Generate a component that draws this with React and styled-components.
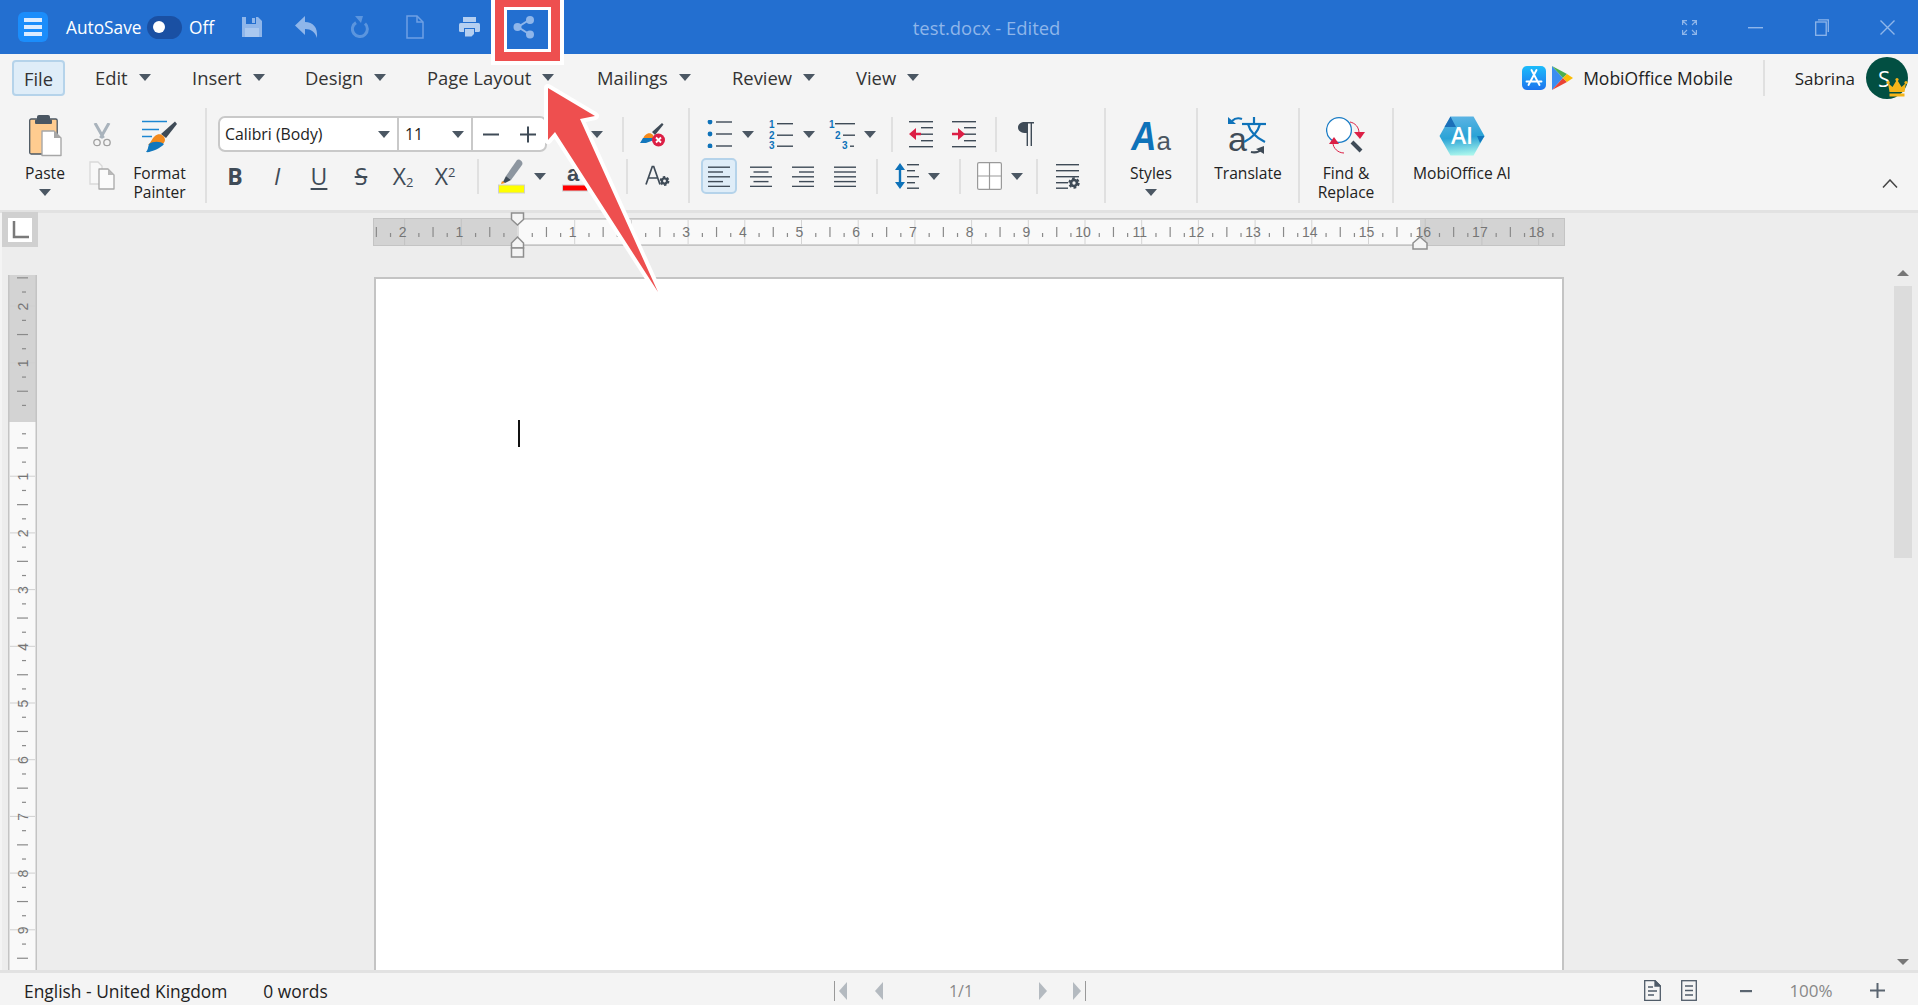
import React from "react";
import styled, { createGlobalStyle } from "styled-components";

const INK = "#3f4b57";
const BLUE = "#0e72b9";
const QUICK = "#8fb6ea";
const UI_FONT = `"Open Sans", "Noto Sans", sans-serif`;

const Global = createGlobalStyle`
  html, body, #root { margin: 0; padding: 0; height: 100%; }
  body { font-family: ${UI_FONT}; background: #f4f4f4; overflow: hidden; color: #222; }
  * { box-sizing: border-box; }
  svg { display: block; flex: none; }
`;

const Page = styled.div`
  position: relative;
  width: 1918px;
  height: 1005px;
  display: flex;
  flex-direction: column;
  overflow: hidden;
`;

/* ---------- title bar ---------- */
const TitleBar = styled.header`
  height: 54px;
  flex: none;
  background: #236fd0;
  display: flex;
  align-items: center;
  padding-left: 18px;
  color: #fff;
`;
const AppButton = styled.div`
  width: 30px;
  height: 30px;
  border-radius: 6px;
  background: #1b8dfb;
  display: flex;
  flex-direction: column;
  justify-content: center;
  gap: 3px;
  padding: 0 6px;
  span { height: 4px; background: #dcebff; }
`;
const AutoSaveLabel = styled.span`
  margin-left: 18px;
  font-size: 17.3px;
  width: 81px;
  white-space: nowrap;
`;
const Toggle = styled.div`
  width: 35px;
  height: 23px;
  border-radius: 12px;
  background: #1a50a3;
  display: flex;
  align-items: center;
  padding-left: 6px;
  span { width: 12px; height: 12px; border-radius: 50%; background: #fff; }
`;
const OffLabel = styled.span`
  margin-left: 7px;
  font-size: 17.3px;
  width: 36px;
`;
const QuickSlot = styled.div`
  width: 54.3px;
  height: 30px;
  display: flex;
  align-items: center;
  justify-content: center;
`;
const DocTitle = styled.div`
  margin-left: 362px;
  width: 200px;
  font-size: 18.4px;
  color: #8fb6ea;
  white-space: nowrap;
`;
const WindowControls = styled.div`
  margin-left: auto;
  display: flex;
  align-items: center;
  padding-right: 23px;
  gap: 51.5px;
`;

/* ---------- menu row ---------- */
const MenuRow = styled.nav`
  height: 51px;
  flex: none;
  display: flex;
  align-items: center;
  padding: 0 10px 3px 12px;
  font-size: 18.4px;
  color: #333;
`;
const FileTab = styled.div`
  width: 53px;
  height: 36px;
  margin-right: 30px;
  border: 2px solid #b5d3ea;
  border-radius: 4px;
  background: #dfedf8;
  display: flex;
  align-items: center;
  justify-content: center;
`;
const MenuItem = styled.div`
  width: ${(p) => p.$w}px;
  display: flex;
  align-items: center;
  gap: 11px;
  padding-bottom: 2px;
  white-space: nowrap;
`;
const Caret = styled.span`
  flex: none;
  width: 0;
  height: 0;
  display: inline-block;
  margin-left: ${(p) => p.$ml || 0}px;
  margin-top: ${(p) => p.$mt || 0}px;
  border-left: 6px solid transparent;
  border-right: 6px solid transparent;
  border-top: 7px solid #4b5763;
`;
const PromoGroup = styled.div`
  margin-left: auto;
  display: flex;
  align-items: center;
  color: #222;
  gap: 6px;
`;
const PromoText = styled.span`
  margin-left: 4px;
  font-size: 17.5px;
`;
const VBar = styled.span`
  width: 2px;
  height: 36px;
  margin: 0 24px;
  background: #e0e0e0;
`;
const UserName = styled.span`
  font-size: 17px;
  margin-right: 5px;
`;
const Avatar = styled.div`
  position: relative;
  width: 42px;
  height: 42px;
  border-radius: 50%;
  background: #024f42;
  color: #fff;
  font-size: 22px;
  display: flex;
  align-items: center;
  justify-content: center;
  padding-right: 6px;
`;
const CrownBadge = styled.span`
  position: absolute;
  right: 0;
  bottom: 1px;
`;

/* ---------- ribbon ---------- */
const Ribbon = styled.section`
  height: 108px;
  flex: none;
  display: flex;
  align-items: flex-start;
  border-bottom: 3px solid #e2e2e2;
`;
const GroupSep = styled.span`
  flex: none;
  width: 2px;
  height: 95px;
  margin-top: 3px;
  background: #e0e0e0;
`;
const ClipGroup = styled.div`
  width: 205px;
  display: flex;
`;
const BigButton = styled.div`
  width: ${(p) => p.$w}px;
  flex: none;
  padding-top: 6px;
  display: flex;
  flex-direction: column;
  align-items: center;
`;
const IconBox = styled.div`
  height: 50px;
  margin-bottom: 2.5px;
  display: flex;
  align-items: center;
  justify-content: center;
`;
const Label = styled.div`
  font-size: 15.6px;
  line-height: 19.5px;
  text-align: center;
  color: #222;
  white-space: nowrap;
`;
const SmallColumn = styled.div`
  width: 24px;
  padding-top: 18px;
  display: flex;
  flex-direction: column;
  align-items: center;
  gap: 14px;
`;
const ToolGroup = styled.div`
  width: ${(p) => p.$w}px;
  flex: none;
  padding-top: 11px;
  display: flex;
  flex-direction: column;
  gap: 6px;
`;
const Row = styled.div`
  height: 36px;
  display: flex;
  align-items: center;
`;
const Tool = styled.span`
  flex: none;
  width: ${(p) => p.$w}px;
  height: 36px;
  margin-left: ${(p) => p.$ml || 0}px;
  padding-left: ${(p) => p.$pl || 0}px;
  display: flex;
  align-items: center;
  justify-content: center;
  border-radius: 5px;
  border: ${(p) => (p.$active ? "2px solid #b5d3ea" : "none")};
  background: ${(p) => (p.$active ? "#dfedf8" : "transparent")};
`;
const ListTool = styled.span`
  flex: none;
  width: 61px;
  margin-left: ${(p) => p.$ml || 0}px;
  display: flex;
  align-items: center;
  gap: 9px;
`;
const ShortSep = styled.span`
  flex: none;
  width: 2px;
  height: 35px;
  margin-left: ${(p) => p.$ml || 0}px;
  background: #e0e0e0;
`;
const Combo = styled.div`
  width: 329px;
  height: 36px;
  margin-left: 11px;
  flex: none;
  display: flex;
  border: 2px solid #c9c9c9;
  border-radius: 7px;
  background: #fff;
  font-size: 15.8px;
  color: #222;
`;
const ComboCell = styled.div`
  width: ${(p) => p.$w}px;
  flex: none;
  display: flex;
  align-items: center;
  justify-content: space-between;
  padding: 0 7px 0 5px;
  border-right: ${(p) => (p.$last ? "none" : "2px solid #c9c9c9")};
`;
const SizeValue = styled.span`
  margin-left: 1px;
`;
const Glyph = styled.span`
  font-size: 23px;
  line-height: 1;
  color: ${INK};
  font-weight: ${(p) => (p.$bold ? 700 : 400)};
  font-style: ${(p) => (p.$italic ? "italic" : "normal")};
  text-decoration: ${(p) => p.$deco || "none"};
  text-underline-offset: 3px;
  sub, sup { font-size: 13px; line-height: 0; }
  sub { vertical-align: -2px; }
  sup { vertical-align: 8px; }
`;
const StylesMark = styled.div`
  height: 42px;
  display: flex;
  align-items: baseline;
  font-family: "Liberation Sans", sans-serif;
  line-height: 42px;
  color: #4a5560;
  font-size: 26px;
  b {
    font-size: 41px;
    font-style: italic;
    color: ${BLUE};
    display: inline-block;
    transform: scaleX(0.85);
    margin: 0 -2px;
  }
`;
const CollapseSlot = styled.div`
  margin-left: auto;
  padding: 74px 20px 0 0;
`;

/* ---------- workspace ---------- */
const Workspace = styled.main`
  flex: 1;
  min-height: 0;
  display: grid;
  grid-template-columns: 372px 1193px 1fr;
  grid-template-rows: 64px 1fr;
  background: #ededed;
  border-left: 2px solid #f4f4f4;
`;
const Corner = styled.div`
  width: 36px;
  height: 35px;
  background: #d0d0d0;
  display: flex;
  align-items: center;
  justify-content: center;
  margin-top: -1px;
`;
const CornerInner = styled.div`
  width: 24px;
  height: 24px;
  background: #fff;
  display: flex;
  align-items: center;
  justify-content: center;
`;
const HRulerSlot = styled.div`
  margin-left: -1px;
  margin-top: -1px;
`;
const VRulerSlot = styled.div`
  margin: -2px 0 0 6px;
  overflow: hidden;
`;
const Sheet = styled.div`
  width: 1190px;
  background: #fff;
  border: 2px solid #c4c4c4;
  border-bottom: none;
  padding: 141px 0 0 142px;
`;
const TextCursor = styled.div`
  width: 2px;
  height: 27px;
  background: #111;
`;
const ScrollTrack = styled.div`
  grid-column: 3;
  grid-row: 1 / 3;
  justify-self: end;
  width: 18px;
  margin-right: 6px;
  padding: 57px 0 5px;
  display: flex;
  flex-direction: column;
  align-items: center;
`;
const ScrollUp = styled.span`
  border-left: 6px solid transparent;
  border-right: 6px solid transparent;
  border-bottom: 6px solid #777;
`;
const ScrollDown = styled.span`
  margin-top: auto;
  border-left: 6px solid transparent;
  border-right: 6px solid transparent;
  border-top: 6px solid #777;
`;
const ScrollThumb = styled.div`
  width: 18px;
  height: 272px;
  margin-top: 10px;
  background: #dcdcdc;
`;

/* ---------- status bar ---------- */
const StatusBar = styled.footer`
  height: 35px;
  flex: none;
  border-top: 3px solid #e2e2e2;
  background: #f4f4f4;
  display: flex;
  align-items: center;
  font-size: 17.4px;
  color: #222;
  padding-top: 3px;
`;
const StatusLeft = styled.div`
  width: 834px;
  padding-left: 24px;
  display: flex;
  gap: 36px;
  white-space: nowrap;
`;
const PagerText = styled.span`
  width: 110px;
  margin-left: ${(p) => p.$ml || 0}px;
  text-align: center;
  font-size: 16px;
  color: #888;
`;
const PagerButton = styled.span`
  margin-left: ${(p) => p.$ml || 0}px;
`;
const StatusRight = styled.div`
  margin-left: auto;
  padding-right: 33px;
  display: flex;
  align-items: center;
  color: #888;
  font-size: 17px;
`;
const ZoomText = styled.span`
  width: 44px;
  margin: 0 37px;
  text-align: center;
  white-space: nowrap;
`;
const ViewButton = styled.span`
  margin-right: ${(p) => p.$mr || 0}px;
`;

/* ---------- annotation overlay ---------- */
const ShareFrame = styled.div`
  position: absolute;
  left: 495px;
  top: 0;
  width: 65px;
  height: 61px;
  border: 9px solid #ee4f4f;
  border-top-width: 7px;
  border-bottom-width: 9px;
  outline: 4px solid #fff;
  box-shadow: inset 0 0 0 3px #fff;
`;
const ArrowLayer = styled.svg`
  position: absolute;
  left: 0;
  top: 0;
  pointer-events: none;
`;

/* ---------- icons ---------- */
const SaveIcon = () => (
  <svg width="20" height="20" viewBox="0 0 20 20">
    <path d="M0 0H16L20 4V20H0Z" fill={QUICK} />
    <rect x="4" y="0" width="10" height="7" fill="#236fd0" />
    <rect x="10" y="1" width="3" height="5" fill={QUICK} />
    <rect x="3" y="11" width="14" height="9" fill="#a9c8f0" />
  </svg>
);
const UndoIcon = () => (
  <svg width="23" height="22" viewBox="0 0 23 22">
    <path d="M10 0V6C18 6 23 11 22 22C20 16 16 13 10 13V19L0 9.5Z" fill={QUICK} />
  </svg>
);
const RedoIcon = () => (
  <svg width="20" height="22" viewBox="0 0 20 22" fill="none">
    <path d="M14 7.5A7.5 7.5 0 1 1 5 6.6" stroke="#5b95de" strokeWidth="3" />
    <path d="M4 0L12 0 10 7Z" fill="#5b95de" />
  </svg>
);
const NewDocIcon = () => (
  <svg width="18" height="24" viewBox="0 0 18 24" fill="none">
    <path d="M1 1H11L17 7V23H1Z" stroke="#6fa0e3" strokeWidth="1.5" />
    <path d="M11 1V7H17" stroke="#6fa0e3" strokeWidth="1.5" />
  </svg>
);
const PrintIcon = () => (
  <svg width="21" height="20" viewBox="0 0 21 20">
    <rect x="4" y="0" width="13" height="5" fill="#b4cff1" />
    <rect x="0" y="6" width="21" height="9" rx="1.5" fill="#b4cff1" />
    <rect x="5" y="11" width="11" height="9" fill="#236fd0" />
    <path d="M6 12H15V17L12.5 19.5H6Z" fill="#b4cff1" />
  </svg>
);
const ShareIcon = () => (
  <svg width="22" height="24" viewBox="0 0 22 24" fill="none">
    <path d="M16 5L5 12L16 19" stroke={QUICK} strokeWidth="2" />
    <circle cx="17" cy="5" r="4" fill={QUICK} />
    <circle cx="4.5" cy="12" r="4" fill={QUICK} />
    <circle cx="17" cy="19.5" r="4" fill={QUICK} />
  </svg>
);
const FullIcon = () => (
  <svg width="15" height="15" viewBox="0 0 15 15" fill="none" stroke={QUICK} strokeWidth="1.2">
    <path d="M0.6 5V0.6H5M0.6 0.6L5 5M14.4 5V0.6H10M14.4 0.6L10 5M0.6 10V14.4H5M0.6 14.4L5 10M14.4 10V14.4H10M14.4 14.4L10 10" />
  </svg>
);
const MinIcon = () => (
  <svg width="15" height="15" viewBox="0 0 15 15">
    <rect y="7" width="15" height="1.4" fill={QUICK} />
  </svg>
);
const MaxIcon = () => (
  <svg width="14" height="17" viewBox="0 0 14 17" fill="none" stroke={QUICK} strokeWidth="1.3">
    <rect x="0.7" y="3" width="10.5" height="13.3" />
    <path d="M3 0.8H13.3V13" />
  </svg>
);
const CloseIcon = () => (
  <svg width="15" height="15" viewBox="0 0 15 15" stroke={QUICK} strokeWidth="1.4">
    <path d="M0.5 0.5L14.5 14.5M14.5 0.5L0.5 14.5" />
  </svg>
);
const AppStoreIcon = () => (
  <svg width="24" height="24" viewBox="0 0 24 24">
    <defs>
      <linearGradient id="appstore" x1="0" y1="0" x2="0" y2="1">
        <stop offset="0" stopColor="#1cbcfb" />
        <stop offset="1" stopColor="#1d74ee" />
      </linearGradient>
    </defs>
    <rect width="24" height="24" rx="5" fill="url(#appstore)" />
    <path d="M9.5 4L17.5 19M14.5 4L6.5 19M4.5 15.5H19.5" stroke="#fff" strokeWidth="1.9" strokeLinecap="round" />
  </svg>
);
const PlayIcon = () => (
  <svg width="21" height="24" viewBox="0 0 21 24">
    <path d="M0 0L11 12L0 24Z" fill="#3b8df1" />
    <path d="M0 0L15 8L11 12Z" fill="#4caf50" />
    <path d="M0 24L15 16L11 12Z" fill="#ea4335" />
    <path d="M15 8L21 12L15 16L11 12Z" fill="#fbbc04" />
  </svg>
);
const CrownIcon = () => (
  <svg width="22" height="20" viewBox="0 0 22 20" fill="#f4b41a">
    <path d="M2 5L6.5 9L11 1.5L15.5 9L20 5L18.5 14H3.5Z" />
    <rect x="3.5" y="15.5" width="15" height="3" />
    <circle cx="2" cy="4.5" r="1.6" />
    <circle cx="20" cy="4.5" r="1.6" />
    <circle cx="11" cy="1.6" r="1.6" />
  </svg>
);
const PasteIcon = () => (
  <svg width="36" height="44" viewBox="0 0 36 44">
    <rect x="2.7" y="5" width="27.5" height="35" rx="1.5" fill="#ffcc90" stroke="#4b5763" strokeWidth="1.3" />
    <rect x="10" y="1" width="13" height="7" rx="2" fill="#4b5763" />
    <rect x="8" y="5.5" width="17" height="4.5" rx="1" fill="#4b5763" />
    <path d="M15 17H27L34 24V41.5H15Z" fill="#fff" stroke="#a7a7a7" strokeWidth="1.4" strokeLinejoin="round" />
    <path d="M27 17L34 24H27Z" fill="#a7a7a7" />
  </svg>
);
const ScissorsIcon = () => (
  <svg width="18" height="24" viewBox="0 0 18 24" fill="none">
    <path d="M2 0L10.5 15M16 0L7.5 15" stroke="#a9b3bc" strokeWidth="3" />
    <circle cx="4" cy="19.5" r="3.2" stroke="#a0a0a0" strokeWidth="1.3" />
    <circle cx="14" cy="19.5" r="3.2" stroke="#a0a0a0" strokeWidth="1.3" />
  </svg>
);
const CopyIcon = () => (
  <svg width="26" height="29" viewBox="0 0 26 29" fill="none">
    <path d="M1 1H9L13 5V23H1Z" stroke="#d9d9d9" strokeWidth="1.3" fill="#f8f8f8" />
    <path d="M10 8H19L25 14V28H10Z" fill="#fbfbfb" stroke="#a9a9a9" strokeWidth="1.3" strokeLinejoin="round" />
    <path d="M19 8L25 14H19Z" fill="#b9b9b9" />
  </svg>
);
const PainterIcon = () => (
  <svg width="36" height="33" viewBox="0 0 36 33" fill="none">
    <path d="M0 1.5H25M0 9.5H17M0 16.5H10" stroke="#1c86d1" strokeWidth="1.5" />
    <path d="M19 14L33 1.5L35 4L24 18Z" fill="#3f4b57" />
    <path d="M13 16C17 12 23 15 23 20C23 22 21 24 19 25L6 25C9 23 10 18 13 16Z" fill="#f48a1c" />
    <path d="M7 24C11 21 18 21 22 24C19 28 8 33 4 32C6 30 6 27 7 24Z" fill="#1277bd" />
  </svg>
);
const ClearFormatIcon = () => (
  <svg width="26" height="26" viewBox="0 0 26 26">
    <path d="M12 11L22 2L23.5 3.5L15 14Z" fill={INK} />
    <path d="M3 18C4 13 10 10 13 14L14 18Z" fill="#f48a1c" />
    <path d="M0 22L3 17L13 17L14 19L6 22Z" fill="#1277bd" />
    <circle cx="18.5" cy="19" r="6.5" fill="#dc1f45" />
    <path d="M16 16.5L21 21.5M21 16.5L16 21.5" stroke="#fff" strokeWidth="1.8" />
  </svg>
);
const Gear = ({ x, y, r = 3 }) => (
  <g fill="none" stroke={INK}>
    <circle cx={x} cy={y} r={r} strokeWidth={r * 0.9} />
    <circle cx={x} cy={y} r={r * 1.55} strokeWidth={r * 0.7} strokeDasharray={`${r * 0.9} ${r * 0.72}`} />
  </g>
);
const AGearIcon = () => (
  <svg width="26" height="22" viewBox="0 0 26 22">
    <path d="M1 19.5L7.3 1.5H8.7L15 19.5M4 13H12" fill="none" stroke={INK} strokeWidth="1.7" />
    <Gear x={19.5} y={16} r={2.6} />
  </svg>
);
const HighlightIcon = () => (
  <svg width="27" height="36" viewBox="0 0 27 36">
    <path d="M8 18L19 2C21 0 26 4 24 7L13 22Z" fill="#8d96a0" />
    <path d="M8 18L13 22L7 25L5 24Z" fill={INK} />
    <path d="M4 23L7 25L3 26Z" fill="#f48a1c" />
    <rect x="0.5" y="27" width="26" height="8" fill="#ffff00" stroke="#cfcfcf" />
  </svg>
);
const FontColorIcon = () => (
  <svg width="26" height="36" viewBox="0 0 26 36">
    <text x="5" y="23" fontFamily="Liberation Sans, sans-serif" fontSize="22" fontWeight="700" fill={INK}>a</text>
    <path d="M9 3L15 0" stroke={INK} strokeWidth="2" />
    <rect x="0.5" y="27" width="25" height="6" fill="#ff0000" stroke="#cfcfcf" />
  </svg>
);
const Lines = ({ x = 0, ys, w = 22, color = INK, lens }) =>
  ys.map((y, i) => (
    <rect key={y} x={x} y={y} width={lens ? lens[i] : w} height="1.4" fill={color} />
  ));
const BulletIcon = () => (
  <svg width="26" height="28" viewBox="0 0 26 28">
    {[2, 14, 26].map((y) => (
      <circle key={y} cx="3" cy={y} r="2.4" fill={BLUE} />
    ))}
    <Lines x={9} ys={[1.3, 13.3, 25.3]} w={16} />
  </svg>
);
const TinyNum = styled.text`
  font-family: "Liberation Sans", sans-serif;
  font-size: 10px;
  font-weight: 700;
  fill: ${BLUE};
`;
const NumberIcon = () => (
  <svg width="26" height="34" viewBox="0 -2 26 34">
    <TinyNum x="1" y="9">1</TinyNum>
    <TinyNum x="1" y="20">2</TinyNum>
    <TinyNum x="1" y="30">3</TinyNum>
    <Lines x={9} ys={[4, 15.5, 26.5]} w={16} />
  </svg>
);
const MultiIcon = () => (
  <svg width="26" height="34" viewBox="0 -2 26 34">
    <TinyNum x="0" y="9">1</TinyNum>
    <TinyNum x="6" y="20">2</TinyNum>
    <TinyNum x="13" y="30">3</TinyNum>
    <Lines x={6} ys={[4]} w={20} />
    <Lines x={14} ys={[15.5]} w={12} />
    <Lines x={21} ys={[26.5]} w={4} />
  </svg>
);
const IndentIcon = ({ flip }) => (
  <svg width="24" height="28" viewBox="0 0 24 28">
    <Lines ys={[1, 26]} w={24} />
    <Lines x={12} ys={[7, 13.5, 20]} w={12} />
    {flip ? (
      <path d="M0 12.8H6V8L13 14L6 20V15.2H0Z" fill="#dc1f45" />
    ) : (
      <path d="M12 12.8H7V8L0 14L7 20V15.2H12Z" fill="#dc1f45" />
    )}
  </svg>
);
const PilcrowIcon = () => (
  <svg width="16" height="24" viewBox="0 0 16 24">
    <path d="M7 0H16V1.4H14V24H12.6V1.4H10V24H8.6V11C3 11 0 9 0 5.5C0 2 3 0 7 0Z" fill={INK} />
  </svg>
);
const AlignIcon = ({ mode }) => {
  const long = 22;
  const short = 15;
  const spec = [long, short, long, short, long];
  return (
    <svg width="22" height="21" viewBox="0 0 22 21">
      {spec.map((w, i) => {
        const width = mode === "justify" ? long : w;
        const x = mode === "center" ? (long - width) / 2 : mode === "right" ? long - width : 0;
        return <rect key={i} x={x} y={i * 4.8 + 0.5} width={width} height="1.4" fill={INK} />;
      })}
    </svg>
  );
};
const SpacingIcon = () => (
  <svg width="25" height="26" viewBox="0 0 25 26">
    <path d="M5 0L10 7H6.2V19H10L5 26L0 19H3.8V7H0Z" fill={BLUE} />
    <Lines x={12} ys={[1, 7, 13, 19, 24.5]} lens={[12, 8, 12, 8, 12]} />
  </svg>
);
const BorderIcon = () => (
  <svg width="25" height="28" viewBox="0 0 25 28" fill="#fff" stroke="#9a9a9a" strokeWidth="1.2">
    <rect x="0.6" y="0.6" width="23.8" height="26.8" rx="1.5" />
    <path d="M12.5 1V27M1 14H24" />
  </svg>
);
const ParaSettingsIcon = () => (
  <svg width="24" height="26" viewBox="0 0 24 26">
    <Lines ys={[1, 7, 13]} w={23} />
    <Lines ys={[19, 24.5]} w={12} />
    <Gear x={18} y={20} r={3} />
  </svg>
);
const TranslateIcon = () => (
  <svg width="40" height="44" viewBox="0 -2 40 44" fill="none">
    <text x="0" y="35" fontFamily="Liberation Sans, sans-serif" fontSize="34" fill={INK}>a</text>
    <path d="M14 8H38" stroke={BLUE} strokeWidth="2.2" />
    <path d="M26 1V8" stroke={BLUE} strokeWidth="2.2" />
    <path d="M20 8C22 16 29 22 37 26M32 8C30 16 24 22 16 26" stroke={BLUE} strokeWidth="2.2" />
    <path d="M0 8V1L8 8Z" fill={BLUE} />
    <path d="M4 5C7 2 10 1.5 14 3" stroke={BLUE} strokeWidth="2.2" />
    <path d="M36 30V38L28 33Z" fill={INK} />
    <path d="M34 33C31 36 27 37 23 36" stroke={INK} strokeWidth="2.2" />
  </svg>
);
const FindReplaceIcon = () => (
  <svg width="40" height="40" viewBox="0 0 40 40" fill="none">
    <circle cx="13" cy="14" r="12.4" fill="#fff" stroke="#1a7cc5" strokeWidth="1.3" />
    <path d="M26 26L35 35" stroke={INK} strokeWidth="4" />
    <path d="M24 6C29 7 33 11 33 17" stroke="#dc1f45" strokeWidth="1" />
    <path d="M28 16H39L34 23Z" fill="#dc1f45" />
    <path d="M7 27C7 32 12 37 18 37" stroke="#dc1f45" strokeWidth="1" />
    <path d="M3 28H13L8 21Z" fill="#dc1f45" />
  </svg>
);
const AiIcon = () => (
  <svg width="46" height="40" viewBox="0 0 46 40">
    <defs>
      <linearGradient id="aihex" x1="0.3" y1="0" x2="0.4" y2="1">
        <stop offset="0" stopColor="#5db4e4" />
        <stop offset="0.55" stopColor="#2aa3d6" />
        <stop offset="1" stopColor="#a8f5ec" />
      </linearGradient>
    </defs>
    <path d="M0.5 20L11.5 0.5H34.5L45.5 20L34.5 39.5H11.5Z" fill="url(#aihex)" />
    <path d="M11.5 0.5L5.5 11H17Z" fill="#1c6fb8" />
    <path d="M45.5 20L38 20L41 27Z" fill="#1277bd" />
    <text x="23" y="28" textAnchor="middle" fontFamily="Open Sans, sans-serif" fontSize="23" fontWeight="600" fill="#fff">AI</text>
  </svg>
);
const ChevronUp = () => (
  <svg width="16" height="9" viewBox="0 0 16 9" fill="none" stroke="#444" strokeWidth="1.5">
    <path d="M1 8.5L8 1L15 8.5" />
  </svg>
);
const CornerMark = () => (
  <svg width="17" height="18" viewBox="0 0 17 18" fill="none" stroke="#7a7a7a" strokeWidth="2.5">
    <path d="M2 0V16H17" />
  </svg>
);
const PagerArrow = ({ dir, bar }) => {
  const points = dir === "left" ? "0,9 8,0 8,18" : "0,0 8,9 0,18";
  return (
    <svg width={bar ? 15 : 9} height="20" viewBox={`0 0 ${bar ? 15 : 9} 20`}>
      {dir === "left" ? (
        <>
          {bar && <rect x="0" y="0" width="1" height="20" fill="#999" />}
          <polygon points={points} transform={`translate(${bar ? 5 : 0} 1)`} fill="#b4bac0" />
        </>
      ) : (
        <>
          <polygon points={points} transform="translate(0 1)" fill="#b4bac0" />
          {bar && <rect x="12" y="0" width="1" height="20" fill="#999" />}
        </>
      )}
    </svg>
  );
};
const PageViewIcon = () => (
  <svg width="17" height="21" viewBox="0 0 17 21" fill="none" stroke="#4f5b68" strokeWidth="1.3">
    <path d="M0.7 0.7H11L16.3 6V20.3H0.7Z" />
    <path d="M11 0.7L16.3 6H11Z" fill="#4f5b68" />
    <path d="M4 7H9M4 11H13M4 15H10" />
  </svg>
);
const WebViewIcon = () => (
  <svg width="16" height="21" viewBox="0 0 16 21" fill="none" stroke="#4f5b68" strokeWidth="1.3">
    <rect x="0.7" y="0.7" width="14.6" height="19.6" />
    <path d="M4 6H12M4 10.5H12M4 15H12" />
  </svg>
);
const MinusIcon = () => (
  <svg width="12" height="12" viewBox="0 0 12 12">
    <rect y="5" width="12" height="2.2" fill="#5a6570" />
  </svg>
);
const PlusIcon = () => (
  <svg width="15" height="15" viewBox="0 0 15 15">
    <rect y="6.5" width="15" height="2" fill="#5a6570" />
    <rect x="6.5" width="2" height="15" fill="#5a6570" />
  </svg>
);
const ComboStepper = () => (
  <svg width="60" height="17" viewBox="0 0 60 17">
    <rect x="5" y="7.5" width="16" height="2" fill={INK} />
    <rect x="42" y="7.5" width="16" height="2" fill={INK} />
    <rect x="49" y="0.5" width="2" height="16" fill={INK} />
  </svg>
);

/* ---------- rulers ---------- */
const CM = 56.7;
const RULER_NUM = {
  fontFamily: "Liberation Sans, sans-serif",
  fontSize: 14,
  fill: "#757575",
};
const HRuler = () => {
  const zero = 144.5;
  const marks = [];
  for (let i = -3; i <= 19; i += 1) {
    const x = zero + i * CM;
    if (x > -CM && x < 1192) marks.push({ i, x });
  }
  return (
    <svg width="1192" height="48" viewBox="0 0 1192 48">
      <rect x="0" y="6" width="1192" height="28" fill="#d3d3d3" />
      <rect x="144" y="8" width="903" height="24" fill="#f9f9f9" />
      <rect x="0.5" y="6.5" width="1191" height="27" fill="none" stroke="#c4c4c4" />
      {marks.map(({ i, x }) => (
        <g key={i}>
          {x > 0 && (
            <rect x={x} y="7" width="1" height="26" fill={i > 0 && i < 16 ? "#d4d4d4" : "#c2c2c2"} />
          )}
          {i !== 0 && x > 8 && (
            <text x={x - 1.5} y="25" textAnchor="middle" {...RULER_NUM}>
              {Math.abs(i)}
            </text>
          )}
          <rect x={x + CM / 2} y="15" width="1.2" height="10" fill="#8a8a8a" />
          <rect x={x + CM / 4} y="21" width="1.2" height="4" fill="#8a8a8a" />
          <rect x={x + (3 * CM) / 4} y="21" width="1.2" height="4" fill="#8a8a8a" />
        </g>
      ))}
      <g fill="#f4f4f4" stroke="#8e8e8e" strokeWidth="1.5">
        <path d="M138.5 1H150.5V7.5L144.5 13L138.5 7.5Z" />
        <path d="M144.5 25L150.5 31V36H138.5V31Z" />
        <rect x="138.5" y="36" width="12" height="9" />
        <path d="M1047 25L1054 31V37H1040V31Z" />
      </g>
    </svg>
  );
};
const VRuler = () => {
  const zero = 144;
  const marks = [];
  for (let i = -3; i <= 10; i += 1) {
    const y = zero + i * CM;
    if (y > -CM && y < 695) marks.push({ i, y });
  }
  return (
    <svg width="29" height="695" viewBox="0 0 29 695">
      <rect width="29" height="695" fill="#f9f9f9" />
      <rect width="29" height="147" fill="#d3d3d3" />
      <rect x="0" width="1.5" height="695" fill="#c4c4c4" />
      <rect x="27.5" width="1.5" height="695" fill="#c4c4c4" />
      {marks.map(({ i, y }) => (
        <g key={i}>
          {i !== 0 && y > 8 && y < 687 && (
            <>
              <rect x="2" y={y} width="25" height="1" fill="#d0d0d0" />
              <text
                transform={`translate(19.5 ${y + 1}) rotate(-90)`}
                textAnchor="middle"
                {...RULER_NUM}
              >
                {Math.abs(i)}
              </text>
            </>
          )}
          <rect x="9" y={y + CM / 2} width="11" height="1.2" fill="#8a8a8a" />
          <rect x="14" y={y + CM / 4} width="4" height="1.2" fill="#8a8a8a" />
          <rect x="14" y={y + (3 * CM) / 4} width="4" height="1.2" fill="#8a8a8a" />
        </g>
      ))}
    </svg>
  );
};

const menus = [
  ["Edit", 97],
  ["Insert", 113],
  ["Design", 122],
  ["Page Layout", 170],
  ["Mailings", 135],
  ["Review", 124],
  ["View", 70],
];

export default function App() {
  return (
    <Page>
      <Global />
      <TitleBar>
        <AppButton>
          <span />
          <span />
          <span />
        </AppButton>
        <AutoSaveLabel>AutoSave</AutoSaveLabel>
        <Toggle>
          <span />
        </Toggle>
        <OffLabel>Off</OffLabel>
        <QuickSlot><SaveIcon /></QuickSlot>
        <QuickSlot><UndoIcon /></QuickSlot>
        <QuickSlot><RedoIcon /></QuickSlot>
        <QuickSlot><NewDocIcon /></QuickSlot>
        <QuickSlot><PrintIcon /></QuickSlot>
        <QuickSlot><ShareIcon /></QuickSlot>
        <DocTitle>test.docx - Edited</DocTitle>
        <WindowControls>
          <FullIcon />
          <MinIcon />
          <MaxIcon />
          <CloseIcon />
        </WindowControls>
      </TitleBar>

      <MenuRow>
        <FileTab>File</FileTab>
        {menus.map(([name, w]) => (
          <MenuItem key={name} $w={w}>
            {name}
            <Caret />
          </MenuItem>
        ))}
        <PromoGroup>
          <AppStoreIcon />
          <PlayIcon />
          <PromoText>MobiOffice Mobile</PromoText>
          <VBar />
          <UserName>Sabrina</UserName>
          <Avatar>
            S
            <CrownBadge><CrownIcon /></CrownBadge>
          </Avatar>
        </PromoGroup>
      </MenuRow>

      <Ribbon>
        <ClipGroup>
          <BigButton $w={90}>
            <IconBox><PasteIcon /></IconBox>
            <Label>Paste</Label>
            <Caret $mt={6} />
          </BigButton>
          <SmallColumn>
            <ScissorsIcon />
            <CopyIcon />
          </SmallColumn>
          <BigButton $w={91}>
            <IconBox><PainterIcon /></IconBox>
            <Label>Format<br />Painter</Label>
          </BigButton>
        </ClipGroup>
        <GroupSep />
        <ToolGroup $w={481}>
          <Row>
            <Combo>
              <ComboCell $w={179}>
                Calibri (Body)
                <Caret />
              </ComboCell>
              <ComboCell $w={74}>
                <SizeValue>11</SizeValue>
                <Caret />
              </ComboCell>
              <ComboCell $w={72} $last>
                <ComboStepper />
              </ComboCell>
            </Combo>
            <Tool $w={75} $pl={25}>
              <Caret />
            </Tool>
            <ShortSep />
            <Tool $w={26} $ml={16}><ClearFormatIcon /></Tool>
          </Row>
          <Row>
            <Tool $w={42} $ml={7}><Glyph $bold>B</Glyph></Tool>
            <Tool $w={42}><Glyph $italic>I</Glyph></Tool>
            <Tool $w={42}><Glyph $deco="underline">U</Glyph></Tool>
            <Tool $w={42}><Glyph $deco="line-through">S</Glyph></Tool>
            <Tool $w={42}><Glyph>X<sub>2</sub></Glyph></Tool>
            <Tool $w={42}><Glyph>X<sup>2</sup></Glyph></Tool>
            <ShortSep $ml={11} />
            <Tool $w={27} $ml={19}><HighlightIcon /></Tool>
            <Caret $ml={9} />
            <Tool $w={26} $ml={16}><FontColorIcon /></Tool>
            <ShortSep $ml={38} />
            <Tool $w={26} $ml={17}><AGearIcon /></Tool>
          </Row>
        </ToolGroup>
        <GroupSep />
        <ToolGroup $w={414}>
          <Row>
            <ListTool $ml={17}><BulletIcon /><Caret /></ListTool>
            <ListTool><NumberIcon /><Caret /></ListTool>
            <ListTool><MultiIcon /><Caret /></ListTool>
            <ShortSep $ml={1} />
            <Tool $w={24} $ml={16}><IndentIcon /></Tool>
            <Tool $w={24} $ml={19}><IndentIcon flip /></Tool>
            <ShortSep $ml={19} />
            <Tool $w={16} $ml={21}><PilcrowIcon /></Tool>
          </Row>
          <Row>
            <Tool $w={36} $ml={11} $active><AlignIcon mode="left" /></Tool>
            <Tool $w={42} $ml={3}><AlignIcon mode="center" /></Tool>
            <Tool $w={42}><AlignIcon mode="right" /></Tool>
            <Tool $w={42}><AlignIcon mode="justify" /></Tool>
            <ShortSep $ml={10} />
            <Tool $w={25} $ml={17}><SpacingIcon /></Tool>
            <Caret $ml={8} />
            <ShortSep $ml={19} />
            <Tool $w={25} $ml={16}><BorderIcon /></Tool>
            <Caret $ml={9} />
            <ShortSep $ml={13} />
            <Tool $w={24} $ml={18}><ParaSettingsIcon /></Tool>
          </Row>
        </ToolGroup>
        <GroupSep />
        <BigButton $w={90}>
          <IconBox>
            <StylesMark><b>A</b>a</StylesMark>
          </IconBox>
          <Label>Styles</Label>
          <Caret $mt={6} />
        </BigButton>
        <GroupSep />
        <BigButton $w={100}>
          <IconBox><TranslateIcon /></IconBox>
          <Label>Translate</Label>
        </BigButton>
        <GroupSep />
        <BigButton $w={92}>
          <IconBox><FindReplaceIcon /></IconBox>
          <Label>Find &amp;<br />Replace</Label>
        </BigButton>
        <GroupSep />
        <BigButton $w={136}>
          <IconBox><AiIcon /></IconBox>
          <Label>MobiOffice AI</Label>
        </BigButton>
        <CollapseSlot><ChevronUp /></CollapseSlot>
      </Ribbon>

      <Workspace>
        <Corner>
          <CornerInner><CornerMark /></CornerInner>
        </Corner>
        <HRulerSlot><HRuler /></HRulerSlot>
        <ScrollTrack>
          <ScrollUp />
          <ScrollThumb />
          <ScrollDown />
        </ScrollTrack>
        <VRulerSlot><VRuler /></VRulerSlot>
        <Sheet>
          <TextCursor />
        </Sheet>
      </Workspace>

      <StatusBar>
        <StatusLeft>
          <span>English - United Kingdom</span>
          <span>0 words</span>
        </StatusLeft>
        <PagerButton><PagerArrow dir="left" bar /></PagerButton>
        <PagerButton $ml={26}><PagerArrow dir="left" /></PagerButton>
        <PagerText $ml={22}>1/1</PagerText>
        <PagerButton $ml={23}><PagerArrow dir="right" /></PagerButton>
        <PagerButton $ml={25}><PagerArrow dir="right" bar /></PagerButton>
        <StatusRight>
          <ViewButton $mr={20}><PageViewIcon /></ViewButton>
          <ViewButton $mr={43}><WebViewIcon /></ViewButton>
          <MinusIcon />
          <ZoomText>100%</ZoomText>
          <PlusIcon />
        </StatusRight>
      </StatusBar>

      <ShareFrame />
      <ArrowLayer width="700" height="310" viewBox="0 0 700 310">
        <polygon
          points="548,88 595,116 580,119 658,292 555,132 548,140"
          fill="#ee4f4f"
          stroke="#fff"
          strokeWidth="8"
          strokeLinejoin="round"
        />
        <polygon points="548,88 595,116 580,119 658,292 555,132 548,140" fill="#ee4f4f" />
      </ArrowLayer>
    </Page>
  );
}
